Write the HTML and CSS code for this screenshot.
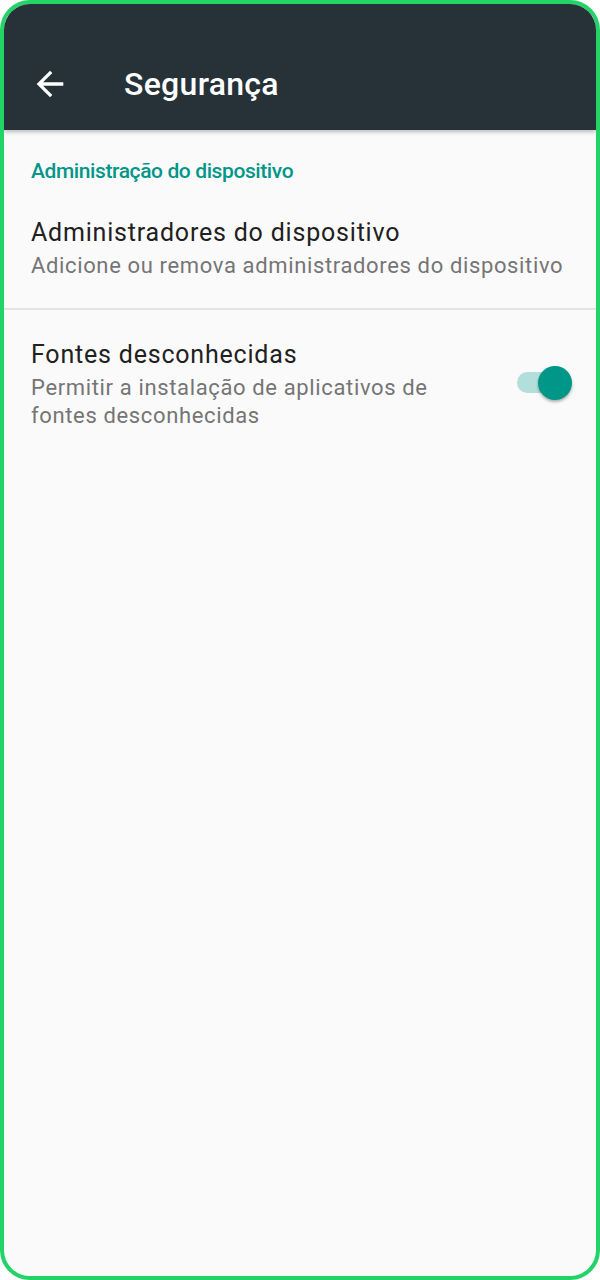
FILE: index.html
```html
<!DOCTYPE html>
<html lang="pt">
<head>
    <meta charset="UTF-8">
    <title>Segurança</title>
    <link rel="stylesheet" href="styles.css">
</head>
<body>
    <div class="phone">
        <div class="toolbar">
            <svg class="back" viewBox="0 0 24 24" width="40" height="40">
                <path d="M20 11H7.83l5.59-5.59L12 4l-8 8 8 8 1.41-1.41L7.83 13H20v-2z" fill="#ffffff"/>
            </svg>
            <h1>Segurança</h1>
        </div>

        <div class="content">
            <div class="category">Administração do dispositivo</div>

            <div class="pref first">
                <div class="pref-text">
                    <div class="pref-title">Administradores do dispositivo</div>
                    <div class="pref-summary">Adicione ou remova administradores do dispositivo</div>
                </div>
            </div>

            <div class="divider"></div>

            <div class="pref">
                <div class="pref-text narrow">
                    <div class="pref-title">Fontes desconhecidas</div>
                    <div class="pref-summary">Permitir a instalação de aplicativos de fontes desconhecidas</div>
                </div>
                <div class="switch">
                    <div class="track"></div>
                    <div class="thumb"></div>
                </div>
            </div>
        </div>
    </div>
</body>
</html>
```

FILE: styles.css
```css
body {
    margin: 0;
    font-family: Roboto, "Noto Sans", sans-serif;
    background-color: #ffffff;
}

.phone {
    width: 600px;
    height: 1280px;
    box-sizing: border-box;
    border: 4px solid #22d466;
    border-radius: 30px;
    overflow: hidden;
    background-color: #fafafa;
}

.toolbar {
    height: 126px;
    background-color: #263238;
    display: flex;
    align-items: center;
    padding-top: 34px;
    box-sizing: border-box;
    box-shadow: 0 2px 4px rgba(0,0,0,0.25);
    position: relative;
}

.back {
    margin-left: 26px;
}

.toolbar h1 {
    margin: 0 0 0 54px;
    color: #ffffff;
    font-size: 32px;
    font-weight: 500;
    letter-spacing: 0.3px;
}

.content {
    padding-top: 27px;
}

.category {
    padding-left: 27px;
    color: #009688;
    font-size: 21px;
    font-weight: 500;
    line-height: 28px;
    letter-spacing: -0.4px;
}

.pref {
    display: flex;
    align-items: flex-start;
    padding: 0 24px 0 27px;
}

.pref-text {
    flex: 1;
    padding: 26px 0 28px;
}

.pref.first .pref-text {
    padding-top: 29px;
}

.pref-text.narrow {
    padding-right: 70px;
}

.pref-title {
    color: #212121;
    font-size: 25px;
    line-height: 38px;
    letter-spacing: 0.8px;
}

.pref-summary {
    color: #757575;
    font-size: 22px;
    line-height: 28px;
    letter-spacing: 0.64px;
}

.divider {
    height: 2px;
    background-color: #e3e3e3;
}

.switch {
    position: relative;
    width: 56px;
    height: 36px;
    margin-top: 55px;
}

.track {
    position: absolute;
    left: 1px;
    top: 7px;
    width: 40px;
    height: 21px;
    border-radius: 11px;
    background-color: #b2dfdb;
}

.thumb {
    position: absolute;
    right: 0;
    top: 1px;
    width: 34px;
    height: 34px;
    border-radius: 50%;
    background-color: #009688;
    box-shadow: 0 2px 3px rgba(0,0,0,0.3);
}
```
